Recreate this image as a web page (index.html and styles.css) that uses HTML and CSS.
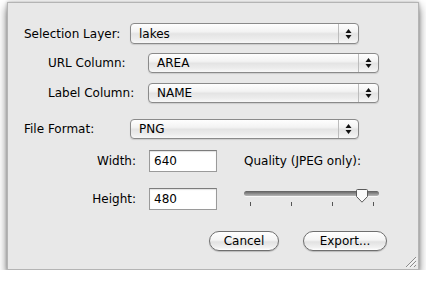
FILE: index.html
```html
<!DOCTYPE html>
<html>
<head>
<meta charset="utf-8">
<link rel="stylesheet" href="styles.css">
</head>
<body>
<div class="window">
  <div class="row r1">
    <span class="label l-outer">Selection Layer:</span>
    <div class="popup w229"><span class="val">lakes</span><span class="arrows"><svg width="7" height="12" viewBox="0 0 7 12"><path d="M3.5 1 L6.5 5 L0.5 5 Z M0.5 7 L6.5 7 L3.5 11 Z" fill="#111"/></svg></span></div>
  </div>
  <div class="row r2">
    <span class="label l-inner">URL Column:</span>
    <div class="popup w231"><span class="val">AREA</span><span class="arrows"><svg width="7" height="12" viewBox="0 0 7 12"><path d="M3.5 1 L6.5 5 L0.5 5 Z M0.5 7 L6.5 7 L3.5 11 Z" fill="#111"/></svg></span></div>
  </div>
  <div class="row r3">
    <span class="label l-inner">Label Column:</span>
    <div class="popup w231"><span class="val">NAME</span><span class="arrows"><svg width="7" height="12" viewBox="0 0 7 12"><path d="M3.5 1 L6.5 5 L0.5 5 Z M0.5 7 L6.5 7 L3.5 11 Z" fill="#111"/></svg></span></div>
  </div>
  <div class="row r4">
    <span class="label l-outer">File Format:</span>
    <div class="popup w229"><span class="val">PNG</span><span class="arrows"><svg width="7" height="12" viewBox="0 0 7 12"><path d="M3.5 1 L6.5 5 L0.5 5 Z M0.5 7 L6.5 7 L3.5 11 Z" fill="#111"/></svg></span></div>
  </div>
  <div class="lower">
    <div class="fields">
      <div class="frow"><span class="flabel">Width:</span><div class="field">640</div></div>
      <div class="frow"><span class="flabel">Height:</span><div class="field">480</div></div>
    </div>
    <div class="quality">
      <div class="qlabel">Quality (JPEG only):</div>
      <div class="slider">
        <div class="track"></div>
        <svg class="thumb" width="12" height="14" viewBox="0 0 12 14"><path d="M1.5 0.5 H10.5 Q11.5 0.5 11.5 1.5 V7.5 L6 13.2 L0.5 7.5 V1.5 Q0.5 0.5 1.5 0.5 Z" fill="#fafafa" stroke="#5a5a5a" stroke-width="1"/></svg>
        <div class="ticks"><i></i><i></i><i></i><i></i></div>
      </div>
    </div>
  </div>
  <div class="buttons">
    <div class="btn cancel">Cancel</div>
    <div class="btn export">Export...</div>
  </div>
  <svg class="grip" width="13" height="13" viewBox="0 0 13 13"><path d="M12 2 L2 12 M12 6 L6 12 M12 10 L10 12" stroke="#8c8c8c" stroke-width="1"/><path d="M12.6 3 L3 12.6 M12.6 7 L7 12.6" stroke="#fff" stroke-width="0.8"/></svg>
</div>
</body>
</html>
```
FILE: styles.css
```css
html, body {
  margin: 0;
  padding: 0;
  background: #ffffff;
}
body {
  font-family: "DejaVu Sans", "Liberation Sans", sans-serif;
  font-size: 12px;
  color: #000;
}
.window {
  position: relative;
  box-sizing: border-box;
  margin: 2px 0 0 7px;
  width: 412px;
  height: 268px;
  background: #e8e8e8;
  border: 1px solid #b4b4b4;
  box-shadow: 0 5px 9px rgba(0, 0, 0, 0.55), 0 0 3px rgba(0, 0, 0, 0.25);
  padding-top: 20px;
}
.row {
  display: flex;
  align-items: center;
  height: 21px;
}
.r2 { margin-top: 9px; height: 20px; }
.r3 { margin-top: 10px; height: 20px; }
.r4 { margin-top: 16px; height: 20px; }
.label {
  white-space: nowrap;
}
.l-outer {
  margin-left: 16px;
  width: 106px;
}
.l-inner {
  margin-left: 40px;
  width: 100px;
}
.popup {
  display: flex;
  box-sizing: border-box;
  height: 100%;
  border: 1px solid #8a8a8a;
  border-radius: 4px;
  background: linear-gradient(#fefefe 0%, #f3f3f3 40%, #e4e4e4 52%, #ececec 78%, #f8f8f8 100%);
  box-shadow: 0 1px 1px rgba(0, 0, 0, 0.12);
}
.w229 { width: 229px; }
.w231 { width: 231px; }
.popup .val {
  flex: 1;
  padding-left: 8px;
  display: flex;
  align-items: center;
}
.popup .arrows {
  width: 19px;
  border-left: 1px solid #bcbcbc;
  display: flex;
  align-items: center;
  justify-content: center;
}
.lower {
  display: flex;
  margin-top: 11px;
}
.fields {
  display: flex;
  flex-direction: column;
  gap: 16px;
}
.frow {
  display: flex;
  align-items: center;
}
.flabel {
  text-align: right;
  padding-right: 13px;
  box-sizing: border-box;
  width: 141px;
}
.field {
  box-sizing: border-box;
  width: 68px;
  height: 22px;
  background: #fff;
  border: 1px solid #9a9a9a;
  border-top-color: #7c7c7c;
  padding-left: 4px;
  display: flex;
  align-items: center;
  box-shadow: inset 0 1px 1px rgba(0, 0, 0, 0.12);
}
.quality {
  margin-left: 27px;
  width: 136px;
}
.qlabel {
  height: 22px;
  display: flex;
  align-items: center;
  white-space: nowrap;
}
.slider {
  position: relative;
  margin-top: 19px;
  height: 20px;
}
.track {
  width: 135px;
  height: 5px;
  border-radius: 3px;
  background: linear-gradient(#5e5e5e, #8a8a8a 50%, #b8b8b8);
  box-shadow: 0 1px 0 rgba(255, 255, 255, 0.7);
}
.thumb {
  position: absolute;
  left: 112px;
  top: -2px;
}
.ticks {
  display: flex;
  gap: 40px;
  margin-left: 6px;
  margin-top: 6px;
}
.ticks i {
  display: block;
  width: 1px;
  height: 4px;
  background: #555;
}
.buttons {
  display: flex;
  gap: 24px;
  margin-top: 20px;
  margin-left: 201px;
}
.btn {
  box-sizing: border-box;
  height: 20px;
  border: 1px solid #6f6f6f;
  border-radius: 10px;
  background: linear-gradient(#ffffff 0%, #f4f4f4 45%, #e2e2e2 55%, #f0f0f0 85%, #ffffff 100%);
  box-shadow: 0 1px 1px rgba(0, 0, 0, 0.2);
  display: flex;
  align-items: center;
  justify-content: center;
}
.cancel { width: 70px; }
.export { width: 84px; }
.grip {
  position: absolute;
  right: 1px;
  bottom: 1px;
}
```
